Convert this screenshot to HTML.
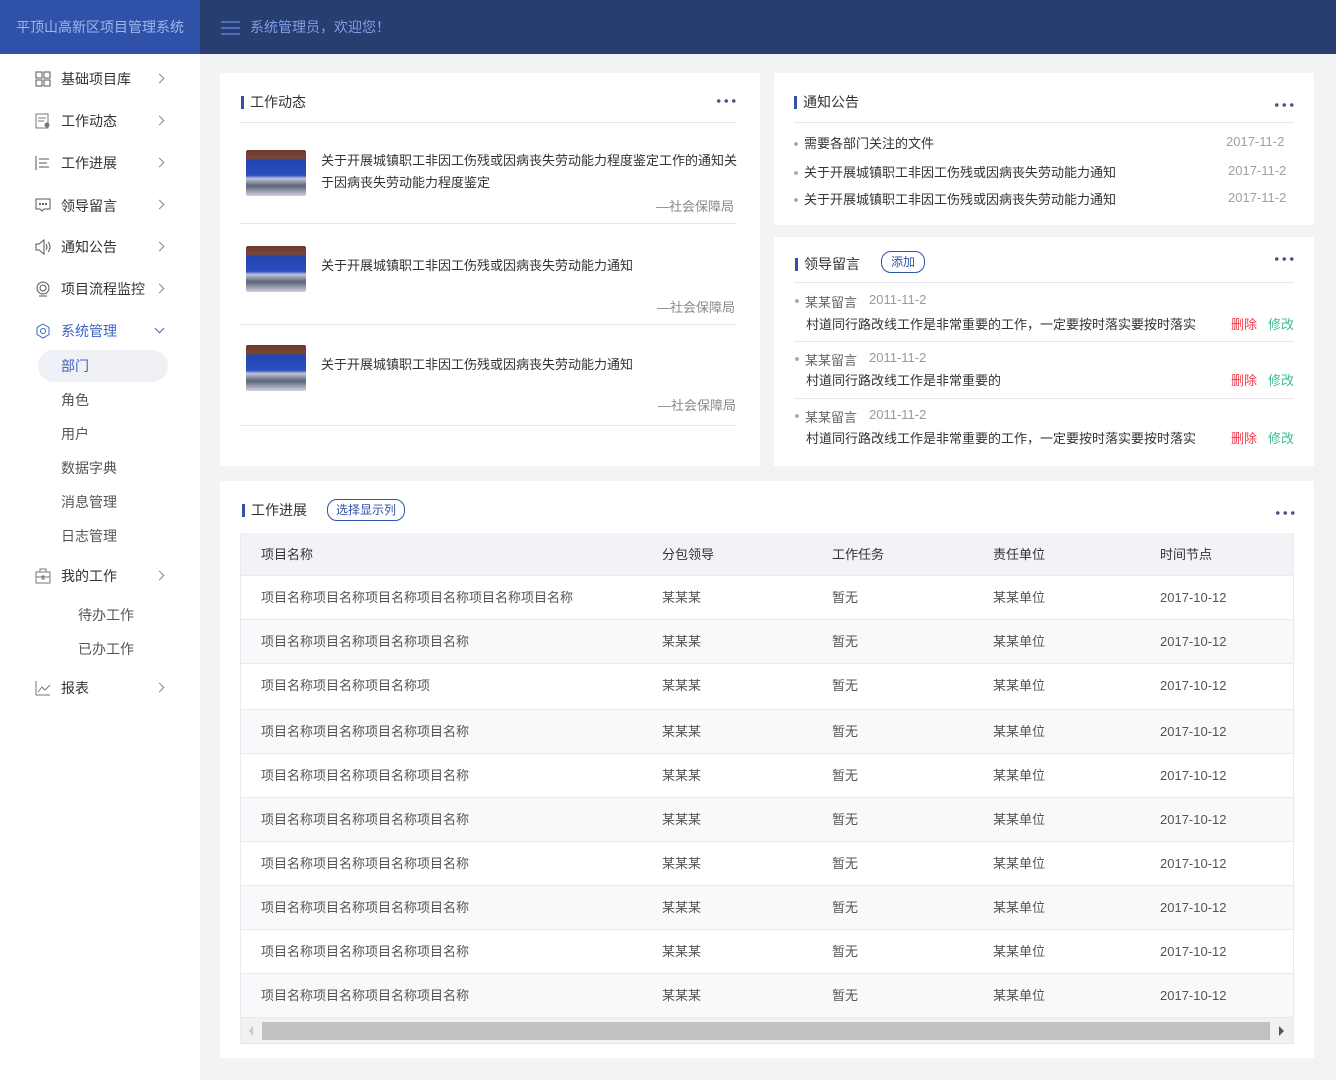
<!DOCTYPE html>
<html><head><meta charset="utf-8"><style>
*{margin:0;padding:0;box-sizing:border-box}
body{width:1336px;height:1080px;background:#f2f3f5;font-family:"Liberation Sans","Noto Sans CJK SC",sans-serif;color:#333;position:relative;overflow:hidden;font-size:13px}
.a{position:absolute;white-space:nowrap}
.hl{position:absolute;left:0;top:0;width:200px;height:54px;background:#2f52a8;color:#9fb6ec;font-size:14px;line-height:54px;text-align:center}
.hr{position:absolute;left:200px;top:0;width:1136px;height:54px;background:#283d70;color:#7f9fe6;font-size:14px;line-height:54px;padding-left:50px;font-family:"Noto Sans CJK SC",sans-serif}
.side{position:absolute;left:0;top:54px;width:200px;height:1026px;background:#fff}
.mi{position:absolute;left:61px;font-size:14px;color:#333;line-height:20px}
.ic{position:absolute;left:35px;width:16px;height:16px}
.ch{position:absolute;left:156px;width:7px;height:7px;border-right:1px solid #888;border-top:1px solid #888;transform:rotate(45deg)}
.sub{position:absolute;left:61px;font-size:14px;color:#555;line-height:20px}
.card{position:absolute;background:#fff}
.tt{position:absolute;font-size:14px;color:#333;padding-left:9px;line-height:18px}
.tt:before{content:"";position:absolute;left:0;top:3px;width:3px;height:13px;background:#2f52a8}
.dots{position:absolute;width:22px;height:4px;background:radial-gradient(circle,#4a5680 1.6px,transparent 2px) 0 0/7.5px 4px repeat-x}
.ln{position:absolute;height:1px;background:#e6e8ee}
.th{position:absolute;width:60px;height:46px;border-radius:2px;background:linear-gradient(#6a3a2e 0,#7a4636 18%,#2444b0 22%,#2a4dc0 55%,#bfc4d6 62%,#5d6378 78%,#d0d3de 100%)}
.nt{position:absolute;left:321px;font-size:13px;color:#333;line-height:22px;white-space:normal;width:420px}
.src{position:absolute;font-size:13px;color:#888}
.dot{position:absolute;width:4px;height:4px;border-radius:2px;background:#aab}
.pill{position:absolute;border:1px solid #2f52a8;border-radius:10px;color:#2f52a8;font-size:12px;line-height:18px;text-align:center}
.row{position:absolute;left:240px;width:1054px;height:44px;border-bottom:1px solid #e8eaf0;font-size:13px;color:#555}
.row span{position:absolute;top:0;line-height:44px}
</style></head><body>
<div class="hl">平顶山高新区项目管理系统</div>
<div class="hr">系统管理员，欢迎您！</div>
<svg class="a" style="left:221px;top:21px" width="19" height="14"><g stroke="#5b7fd8" stroke-width="1.5"><line x1="0" y1="1" x2="19" y2="1"/><line x1="0" y1="7" x2="19" y2="7"/><line x1="0" y1="13" x2="19" y2="13"/></g></svg>

<div class="side"></div>
<svg class="ic" style="top:71px" viewBox="0 0 16 16" fill="none" stroke="#555"><rect x="1" y="1" width="6" height="6"/><rect x="9" y="1" width="6" height="6"/><rect x="1" y="9" width="6" height="6"/><rect x="9" y="9" width="6" height="6"/></svg>
<div class="mi" style="top:69px">基础项目库</div><div class="ch" style="top:75px"></div>
<svg class="ic" style="top:113px" viewBox="0 0 16 16" fill="none" stroke="#777"><rect x="1" y="1" width="12" height="14"/><line x1="3" y1="5" x2="11" y2="5"/><line x1="3" y1="8" x2="9" y2="8"/><circle cx="12" cy="12" r="2" fill="#777"/></svg>
<div class="mi" style="top:111px">工作动态</div><div class="ch" style="top:117px"></div>
<svg class="ic" style="top:155px" viewBox="0 0 16 16" fill="none" stroke="#555"><line x1="1" y1="1" x2="1" y2="15"/><line x1="4" y1="4" x2="14" y2="4"/><line x1="4" y1="8" x2="12" y2="8"/><line x1="4" y1="12" x2="14" y2="12"/></svg>
<div class="mi" style="top:153px">工作进展</div><div class="ch" style="top:159px"></div>
<svg class="ic" style="top:197px" viewBox="0 0 16 16" fill="none" stroke="#555"><path d="M1 2h14v10H9l-2 2-2-2H1z"/><circle cx="5" cy="7" r=".6" fill="#555"/><circle cx="8" cy="7" r=".6" fill="#555"/><circle cx="11" cy="7" r=".6" fill="#555"/></svg>
<div class="mi" style="top:196px">领导留言</div><div class="ch" style="top:201px"></div>
<svg class="ic" style="top:239px" viewBox="0 0 16 16" fill="none" stroke="#555"><path d="M1 5h3l5-4v14l-5-4H1z"/><path d="M11 5q2 3 0 6M13 3q4 5 0 10"/></svg>
<div class="mi" style="top:237px">通知公告</div><div class="ch" style="top:243px"></div>
<svg class="ic" style="top:281px" viewBox="0 0 16 16" fill="none" stroke="#555"><circle cx="8" cy="7" r="6"/><circle cx="8" cy="7" r="3"/><path d="M4 15h8"/></svg>
<div class="mi" style="top:279px">项目流程监控</div><div class="ch" style="top:285px"></div>
<svg class="ic" style="top:323px" viewBox="0 0 16 16" fill="none" stroke="#3d63c4"><path d="M8 1l6 3.5v7L8 15l-6-3.5v-7z"/><circle cx="8" cy="8" r="2.5"/></svg>
<div class="mi" style="top:321px;color:#3d63c4">系统管理</div><div class="ch" style="top:325px;border-color:#3d63c4;transform:rotate(135deg)"></div>
<div class="a" style="left:38px;top:350px;width:130px;height:32px;border-radius:16px;background:#f0f1f6"></div>
<div class="sub" style="top:356px;color:#3d63c4">部门</div>
<div class="sub" style="top:390px">角色</div>
<div class="sub" style="top:424px">用户</div>
<div class="sub" style="top:458px">数据字典</div>
<div class="sub" style="top:492px">消息管理</div>
<div class="sub" style="top:526px">日志管理</div>
<svg class="ic" style="top:568px" viewBox="0 0 16 16" fill="none" stroke="#777"><rect x="1" y="4" width="14" height="11"/><path d="M5 4V1h6v3M1 9h14"/><rect x="7" y="8" width="2" height="3"/></svg>
<div class="mi" style="top:566px">我的工作</div><div class="ch" style="top:572px"></div>
<div class="sub" style="top:605px;left:78px">待办工作</div>
<div class="sub" style="top:639px;left:78px">已办工作</div>
<svg class="ic" style="top:680px" viewBox="0 0 16 16" fill="none" stroke="#777"><path d="M1 1v14h14"/><path d="M3 12l4-5 3 3 5-5"/></svg>
<div class="mi" style="top:678px">报表</div><div class="ch" style="top:684px"></div>

<div class="card" style="left:220px;top:73px;width:540px;height:393px"></div>
<div class="tt" style="left:241px;top:93px">工作动态</div>
<div class="dots" style="left:715px;top:99px"></div>
<div class="ln" style="left:240px;top:122px;width:496px"></div>
<div class="th" style="left:246px;top:150px"></div>
<div class="nt" style="top:150px">关于开展城镇职工非因工伤残或因病丧失劳动能力程度鉴定工作的通知关于因病丧失劳动能力程度鉴定</div>
<div class="src" style="left:656px;top:196px">—社会保障局</div>
<div class="ln" style="left:240px;top:223px;width:496px"></div>
<div class="th" style="left:246px;top:246px"></div>
<div class="nt" style="top:255px">关于开展城镇职工非因工伤残或因病丧失劳动能力通知</div>
<div class="src" style="left:657px;top:297px">—社会保障局</div>
<div class="ln" style="left:240px;top:324px;width:496px"></div>
<div class="th" style="left:246px;top:345px"></div>
<div class="nt" style="top:354px">关于开展城镇职工非因工伤残或因病丧失劳动能力通知</div>
<div class="src" style="left:658px;top:395px">—社会保障局</div>
<div class="ln" style="left:240px;top:425px;width:496px"></div>

<div class="card" style="left:774px;top:73px;width:540px;height:152px"></div>
<div class="tt" style="left:794px;top:93px">通知公告</div>
<div class="dots" style="left:1273px;top:103px"></div>
<div class="ln" style="left:794px;top:122px;width:500px"></div>
<div class="dot" style="left:794px;top:142px"></div><div class="a" style="left:804px;top:133px;color:#333">需要各部门关注的文件</div><div class="a" style="left:1226px;top:134px;color:#a0a0a0">2017-11-2</div>
<div class="dot" style="left:794px;top:171px"></div><div class="a" style="left:804px;top:162px;color:#333">关于开展城镇职工非因工伤残或因病丧失劳动能力通知</div><div class="a" style="left:1228px;top:163px;color:#a0a0a0">2017-11-2</div>
<div class="dot" style="left:794px;top:198px"></div><div class="a" style="left:804px;top:189px;color:#333">关于开展城镇职工非因工伤残或因病丧失劳动能力通知</div><div class="a" style="left:1228px;top:190px;color:#a0a0a0">2017-11-2</div>

<div class="card" style="left:774px;top:237px;width:540px;height:229px"></div>
<div class="tt" style="left:795px;top:255px">领导留言</div>
<div class="pill" style="left:881px;top:251px;width:44px;height:22px;line-height:20px">添加</div>
<div class="dots" style="left:1273px;top:257px"></div>
<div class="ln" style="left:794px;top:282px;width:500px"></div>
<div class="dot" style="left:795px;top:299px"></div><div class="a" style="left:805px;top:292px;color:#666">某某留言</div><div class="a" style="left:869px;top:292px;color:#999">2011-11-2</div>
<div class="a" style="left:806px;top:314px">村道同行路改线工作是非常重要的工作，一定要按时落实要按时落实</div>
<div class="a" style="left:1231px;top:314px;color:#f03a4a">删除</div><div class="a" style="left:1268px;top:314px;color:#3cc08a">修改</div>
<div class="ln" style="left:794px;top:341px;width:500px"></div>
<div class="dot" style="left:795px;top:357px"></div><div class="a" style="left:805px;top:350px;color:#666">某某留言</div><div class="a" style="left:869px;top:350px;color:#999">2011-11-2</div>
<div class="a" style="left:806px;top:370px">村道同行路改线工作是非常重要的</div>
<div class="a" style="left:1231px;top:370px;color:#f03a4a">删除</div><div class="a" style="left:1268px;top:370px;color:#3cc08a">修改</div>
<div class="ln" style="left:794px;top:398px;width:500px"></div>
<div class="dot" style="left:795px;top:414px"></div><div class="a" style="left:805px;top:407px;color:#666">某某留言</div><div class="a" style="left:869px;top:407px;color:#999">2011-11-2</div>
<div class="a" style="left:806px;top:428px">村道同行路改线工作是非常重要的工作，一定要按时落实要按时落实</div>
<div class="a" style="left:1231px;top:428px;color:#f03a4a">删除</div><div class="a" style="left:1268px;top:428px;color:#3cc08a">修改</div>

<div class="card" style="left:220px;top:481px;width:1094px;height:577px"></div>
<div class="tt" style="left:242px;top:501px">工作进展</div>
<div class="pill" style="left:327px;top:499px;width:78px;height:22px;line-height:20px">选择显示列</div>
<div class="dots" style="left:1274px;top:511px"></div>
<div class="row" style="top:533px;background:#f2f3f7;height:43px;color:#333"><span style="left:21px">项目名称</span><span style="left:422px">分包领导</span><span style="left:592px">工作任务</span><span style="left:753px">责任单位</span><span style="left:920px">时间节点</span></div>
<div class="row" style="top:576px;background:#fff"><span style="left:21px">项目名称项目名称项目名称项目名称项目名称项目名称</span><span style="left:422px">某某某</span><span style="left:592px">暂无</span><span style="left:753px">某某单位</span><span style="left:920px">2017-10-12</span></div>
<div class="row" style="top:620px;background:#f8f9fb"><span style="left:21px">项目名称项目名称项目名称项目名称</span><span style="left:422px">某某某</span><span style="left:592px">暂无</span><span style="left:753px">某某单位</span><span style="left:920px">2017-10-12</span></div>
<div class="row" style="top:664px;background:#fff;height:46px"><span style="left:21px">项目名称项目名称项目名称项</span><span style="left:422px">某某某</span><span style="left:592px">暂无</span><span style="left:753px">某某单位</span><span style="left:920px">2017-10-12</span></div>
<div class="row" style="top:710px;background:#f8f9fb"><span style="left:21px">项目名称项目名称项目名称项目名称</span><span style="left:422px">某某某</span><span style="left:592px">暂无</span><span style="left:753px">某某单位</span><span style="left:920px">2017-10-12</span></div>
<div class="row" style="top:754px;background:#fff"><span style="left:21px">项目名称项目名称项目名称项目名称</span><span style="left:422px">某某某</span><span style="left:592px">暂无</span><span style="left:753px">某某单位</span><span style="left:920px">2017-10-12</span></div>
<div class="row" style="top:798px;background:#f8f9fb"><span style="left:21px">项目名称项目名称项目名称项目名称</span><span style="left:422px">某某某</span><span style="left:592px">暂无</span><span style="left:753px">某某单位</span><span style="left:920px">2017-10-12</span></div>
<div class="row" style="top:842px;background:#fff"><span style="left:21px">项目名称项目名称项目名称项目名称</span><span style="left:422px">某某某</span><span style="left:592px">暂无</span><span style="left:753px">某某单位</span><span style="left:920px">2017-10-12</span></div>
<div class="row" style="top:886px;background:#f8f9fb"><span style="left:21px">项目名称项目名称项目名称项目名称</span><span style="left:422px">某某某</span><span style="left:592px">暂无</span><span style="left:753px">某某单位</span><span style="left:920px">2017-10-12</span></div>
<div class="row" style="top:930px;background:#fff"><span style="left:21px">项目名称项目名称项目名称项目名称</span><span style="left:422px">某某某</span><span style="left:592px">暂无</span><span style="left:753px">某某单位</span><span style="left:920px">2017-10-12</span></div>
<div class="row" style="top:974px;background:#f8f9fb"><span style="left:21px">项目名称项目名称项目名称项目名称</span><span style="left:422px">某某某</span><span style="left:592px">暂无</span><span style="left:753px">某某单位</span><span style="left:920px">2017-10-12</span></div>
<div class="a" style="left:240px;top:1018px;width:1054px;height:26px;background:#f1f1f1;border-bottom:1px solid #e4e6ee"></div>
<div class="a" style="left:240px;top:533px;width:1px;height:511px;background:#e8eaf0"></div>
<div class="a" style="left:1293px;top:533px;width:1px;height:511px;background:#e8eaf0"></div>
<div class="a" style="left:262px;top:1022px;width:1008px;height:18px;background:#c1c1c1"></div>
<div class="a" style="left:249px;top:1026px;width:0;height:0;border-top:5px solid transparent;border-bottom:5px solid transparent;border-right:4px solid #c8c8c8"></div>
<div class="a" style="left:1279px;top:1026px;width:0;height:0;border-top:5px solid transparent;border-bottom:5px solid transparent;border-left:5px solid #555"></div>
</body></html>
